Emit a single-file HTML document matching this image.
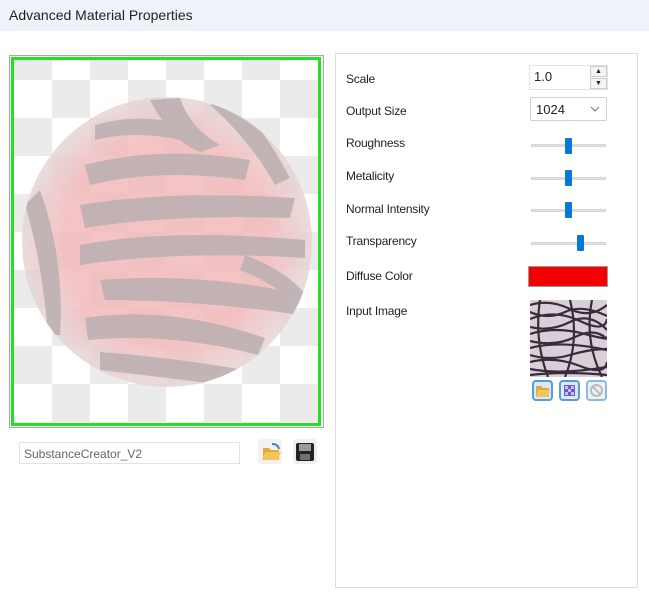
<!DOCTYPE html>
<html><head><style>
*{margin:0;padding:0;box-sizing:border-box}
body{width:649px;height:595px;background:#fff;font-family:"Liberation Sans",sans-serif;position:relative;overflow:hidden;color:#222}
.abs{position:absolute}
.title{left:0;top:0;width:649px;height:31px;background:#eef2f9;font-size:14px;padding:7px 0 0 9px;color:#222}
.lbl{position:absolute;left:346px;font-size:12px;color:#222;letter-spacing:-0.2px}
.track{position:absolute;left:531px;width:75px;height:3px;background:#e2e2e2;border:1px solid #d6d6d6}
.thumb{position:absolute;width:7px;height:16px;background:#0a78d7;border-radius:1px}
.btn{position:absolute;width:21px;height:21px;border:2px solid #5a9ad8;border-radius:4px;background:#dce9f7}
</style></head><body>
<div class="abs title">Advanced Material Properties</div>

<div class="abs" style="left:9px;top:55px;width:315px;height:373px;border:1px solid #a8a8a8;background:#f4f4f4"></div>
<svg class="abs" style="left:11px;top:57px" width="310" height="369" viewBox="11 57 310 369">
<defs>
<pattern id="ck" x="14" y="42" width="76" height="76" patternUnits="userSpaceOnUse">
<rect width="76" height="76" fill="#fff"/>
<rect x="0" y="0" width="38" height="38" fill="#ebebeb"/>
<rect x="38" y="38" width="38" height="38" fill="#ebebeb"/>
</pattern>
<clipPath id="cp"><circle cx="167" cy="242" r="145"/></clipPath>
<radialGradient id="sg" cx="0.5" cy="0.5" r="0.5">
<stop offset="0.7" stop-color="#f2b8ba" stop-opacity="0.85"/>
<stop offset="1" stop-color="#e6d6d6" stop-opacity="0.85"/>
</radialGradient>
</defs>
<rect x="11" y="57" width="310" height="369" fill="url(#ck)"/>
<circle cx="167" cy="242" r="145" fill="url(#sg)"/>
<g clip-path="url(#cp)" fill="#bdb1b2" opacity="0.9">
<path d="M85 165 Q160 145 250 160 L245 180 Q160 168 90 185Z"/>
<path d="M80 205 Q170 190 295 198 L290 218 Q170 214 85 228Z"/>
<path d="M80 245 Q170 228 305 240 L305 258 Q180 250 80 265Z"/>
<path d="M100 280 Q200 272 305 295 L300 315 Q200 300 105 300Z"/>
<path d="M85 318 Q170 305 265 338 L258 355 Q170 332 88 340Z"/>
<path d="M100 352 Q180 358 255 372 L245 388 Q170 378 100 370Z"/>
<path d="M150 100 Q170 140 200 152 L220 145 Q190 128 180 98Z"/>
<path d="M210 105 Q250 140 275 185 L290 178 Q265 130 235 100Z"/>
<path d="M40 190 Q65 260 60 335 L48 335 Q42 260 25 205Z"/>
<path d="M95 125 Q140 112 185 125 L180 140 Q135 130 95 140Z"/>
<path d="M245 255 Q290 272 310 300 L305 315 Q280 285 240 270Z"/>
</g>
<rect x="12.5" y="58.5" width="307" height="366" fill="none" stroke="#22e022" stroke-width="3"/>
</svg>

<div class="abs" style="left:19px;top:442px;width:221px;height:22px;border:1px solid #e2e2e2;font-size:12px;color:#666;padding:4px 0 0 4px">SubstanceCreator_V2</div>
<div class="abs" style="left:258px;top:439px;width:24px;height:25px;border-radius:4px;background:#f2f2f2"></div>
<svg class="abs" style="left:259px;top:440px" width="24" height="24"><path d="M4 8h6l2 2h8v10H4z" fill="#e2aa3a"/><path d="M6 12h16l-3 8H3z" fill="#f5c55a"/><path d="M13 4q6 0 7 5" stroke="#3a7fc8" stroke-width="2" fill="none"/></svg>
<div class="abs" style="left:293px;top:439px;width:24px;height:25px;border-radius:4px;background:#eee"></div>
<svg class="abs" style="left:295px;top:442px" width="20" height="20"><rect x="1" y="1" width="18" height="18" rx="2" fill="#222"/><rect x="4" y="2" width="12" height="7" fill="#9a9a9a"/><rect x="5" y="12" width="10" height="6" fill="#707070"/></svg>

<div class="abs" style="left:335px;top:53px;width:303px;height:535px;border:1px solid #dcdcdc"></div>
<div class="lbl" style="top:72px">Scale</div>
<div class="lbl" style="top:104px">Output Size</div>
<div class="lbl" style="top:136px">Roughness</div>
<div class="lbl" style="top:169px">Metalicity</div>
<div class="lbl" style="top:202px">Normal Intensity</div>
<div class="lbl" style="top:234px">Transparency</div>
<div class="lbl" style="top:269px">Diffuse Color</div>
<div class="lbl" style="top:304px">Input Image</div>

<div class="abs" style="left:529px;top:65px;width:79px;height:25px;border:1px solid #e4e4e4;font-size:13px;padding:3px 0 0 4px">1.0</div>
<div class="abs" style="left:590px;top:66px;width:17px;height:11px;border:1px solid #ccc;background:#f4f4f4;font-size:7px;text-align:center;line-height:9px">▲</div>
<div class="abs" style="left:590px;top:78px;width:17px;height:11px;border:1px solid #ccc;background:#f4f4f4;font-size:7px;text-align:center;line-height:9px">▼</div>
<div class="abs" style="left:530px;top:97px;width:77px;height:24px;border:1px solid #d0d0d0;border-radius:2px;font-size:13px;padding:4px 0 0 5px">1024</div>
<svg class="abs" style="left:590px;top:106px" width="10" height="6"><path d="M1 1l4 4 4-4" stroke="#777" fill="none"/></svg>

<div class="track" style="top:144px"></div><div class="thumb" style="left:565px;top:138px"></div>
<div class="track" style="top:177px"></div><div class="thumb" style="left:565px;top:170px"></div>
<div class="track" style="top:209px"></div><div class="thumb" style="left:565px;top:202px"></div>
<div class="track" style="top:242px"></div><div class="thumb" style="left:577px;top:235px"></div>

<div class="abs" style="left:528px;top:266px;width:80px;height:21px;background:#f40000;border:1px solid #999"></div>

<svg class="abs" style="left:530px;top:300px" width="77" height="77" viewBox="0 0 77 77">
<rect width="77" height="77" fill="#d8d0d8"/>
<g stroke="#3a2a3a" stroke-width="2.2" fill="none">
<path d="M0 5q20-6 40 4t37-4"/><path d="M0 12q18 8 35 0t42 4"/><path d="M0 19q25-10 50 2t27-2"/><path d="M0 27q20 5 40-5t37 8"/><path d="M0 34q25-8 55 0t22 2"/><path d="M0 41q25 6 45-4t32 2"/><path d="M0 48q30-8 77 2"/><path d="M0 55q20 6 40 0t37-6"/><path d="M0 62q25-6 50 4t27-4"/><path d="M0 69q30 6 77-2"/><path d="M0 75q35-4 77 0"/>
<path d="M10 0q-6 40 8 77"/><path d="M40 0q10 40-5 77"/><path d="M62 0q-8 40 10 77"/>
</g>
</svg>
<div class="btn" style="left:532px;top:380px"></div>
<svg class="abs" style="left:535px;top:384px" width="16" height="14"><path d="M1 2h5l2 2h6v9H1z" fill="#e2aa3a"/><path d="M3 6h12l-2 7H1z" fill="#f5c55a"/></svg>
<div class="btn" style="left:559px;top:380px"></div>
<div class="abs" style="left:564px;top:385px;width:11px;height:11px;background:#6a5acd"></div>
<svg class="abs" style="left:564px;top:385px" width="11" height="11"><g fill="#c8c0f0"><rect x="1" y="1" width="3" height="3"/><rect x="7" y="1" width="3" height="3"/><rect x="4" y="4" width="3" height="3"/><rect x="1" y="7" width="3" height="3"/><rect x="7" y="7" width="3" height="3"/></g></svg>
<div class="btn" style="left:586px;top:380px;border-color:#8fb8e0;background:#eef2f6"></div>
<svg class="abs" style="left:589px;top:383px" width="15" height="15"><circle cx="7.5" cy="7.5" r="5.5" stroke="#bbb" stroke-width="2" fill="none"/><path d="M3.5 3.5l8 8" stroke="#bbb" stroke-width="2"/></svg>
</body></html>
